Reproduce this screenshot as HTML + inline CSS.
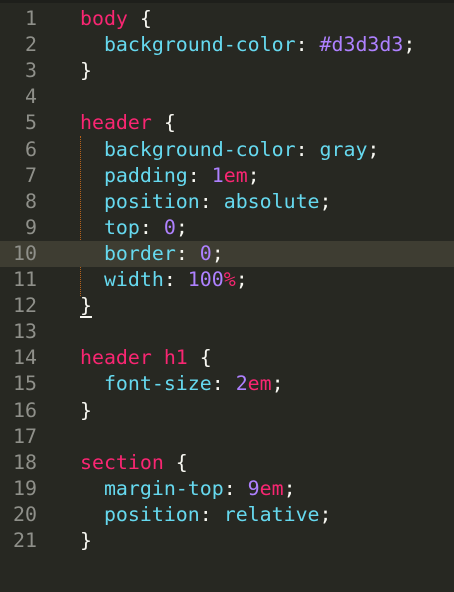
<!DOCTYPE html>
<html><head><style>
html,body{margin:0;padding:0;width:454px;height:592px;background:#272822;overflow:hidden}
.top{position:absolute;left:0;top:0;width:454px;height:3px;background:#1e1f1b}
.ln{position:absolute;left:0;width:454px;height:26.1px;font:19.9px/26.1px "DejaVu Sans Mono","Liberation Mono",monospace;white-space:pre;color:#f8f8f2}
.n{position:absolute;right:417px;color:#8f908a}
.c{position:absolute;left:80px}
.hl{background:#3e3d32}
.k{color:#f92672}.p{color:#66d9ef}.v{color:#ae81ff}
.guide{position:absolute;left:80px;top:136px;height:160px;border-left:1px dotted #b5611a}
.u{text-decoration:underline;text-underline-offset:4px;text-decoration-thickness:2px}
</style></head><body>
<div class="top"></div>
<div class="guide"></div>
<div class="ln" style="top:6px"><span class="n">1</span><span class="c"><span class="k">body</span> {</span></div>
<div class="ln" style="top:32.1px"><span class="n">2</span><span class="c">  <span class="p">background-color</span>: <span class="v">#d3d3d3</span>;</span></div>
<div class="ln" style="top:58.2px"><span class="n">3</span><span class="c">}</span></div>
<div class="ln" style="top:84.3px"><span class="n">4</span></div>
<div class="ln" style="top:110.4px"><span class="n">5</span><span class="c"><span class="k">header</span> {</span></div>
<div class="ln" style="top:136.5px"><span class="n">6</span><span class="c">  <span class="p">background-color</span>: <span class="p">gray</span>;</span></div>
<div class="ln" style="top:162.6px"><span class="n">7</span><span class="c">  <span class="p">padding</span>: <span class="v">1</span><span class="k">em</span>;</span></div>
<div class="ln" style="top:188.7px"><span class="n">8</span><span class="c">  <span class="p">position</span>: <span class="p">absolute</span>;</span></div>
<div class="ln" style="top:214.8px"><span class="n">9</span><span class="c">  <span class="p">top</span>: <span class="v">0</span>;</span></div>
<div class="ln hl" style="top:240.9px"><span class="n">10</span><span class="c">  <span class="p">border</span>: <span class="v">0</span>;</span></div>
<div class="ln" style="top:267px"><span class="n">11</span><span class="c">  <span class="p">width</span>: <span class="v">100</span><span class="k">%</span>;</span></div>
<div class="ln" style="top:293.1px"><span class="n">12</span><span class="c"><span class="u">}</span></span></div>
<div class="ln" style="top:319.2px"><span class="n">13</span></div>
<div class="ln" style="top:345.3px"><span class="n">14</span><span class="c"><span class="k">header h1</span> {</span></div>
<div class="ln" style="top:371.4px"><span class="n">15</span><span class="c">  <span class="p">font-size</span>: <span class="v">2</span><span class="k">em</span>;</span></div>
<div class="ln" style="top:397.5px"><span class="n">16</span><span class="c">}</span></div>
<div class="ln" style="top:423.6px"><span class="n">17</span></div>
<div class="ln" style="top:449.7px"><span class="n">18</span><span class="c"><span class="k">section</span> {</span></div>
<div class="ln" style="top:475.8px"><span class="n">19</span><span class="c">  <span class="p">margin-top</span>: <span class="v">9</span><span class="k">em</span>;</span></div>
<div class="ln" style="top:501.9px"><span class="n">20</span><span class="c">  <span class="p">position</span>: <span class="p">relative</span>;</span></div>
<div class="ln" style="top:528px"><span class="n">21</span><span class="c">}</span></div>
</body></html>
